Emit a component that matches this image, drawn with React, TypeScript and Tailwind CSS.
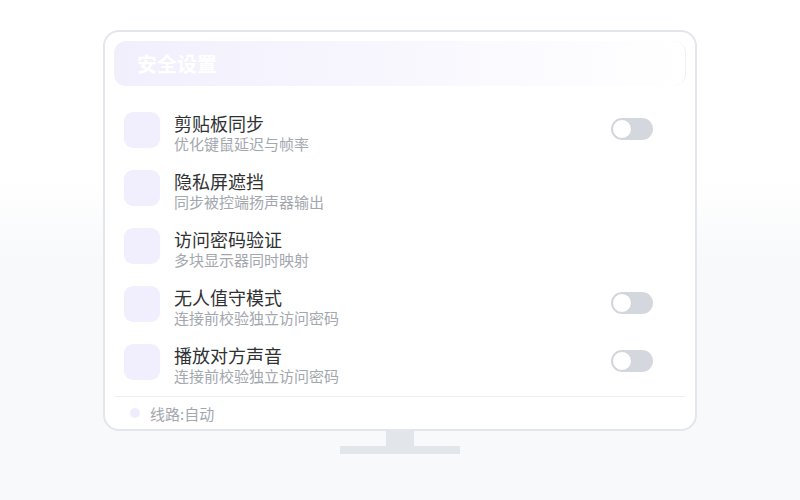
const font = { fontFamily: '"Noto Sans CJK SC", "Noto Sans", sans-serif' };

type Row = { title: string; desc: string; toggle: boolean };

const rows: Row[] = [
  { title: "剪贴板同步", desc: "优化键鼠延迟与帧率", toggle: true },
  { title: "隐私屏遮挡", desc: "同步被控端扬声器输出", toggle: false },
  { title: "访问密码验证", desc: "多块显示器同时映射", toggle: false },
  { title: "无人值守模式", desc: "连接前校验独立访问密码", toggle: true },
  { title: "播放对方声音", desc: "连接前校验独立访问密码", toggle: true },
];

function Toggle() {
  return (
    <div className="mt-[6px] ml-auto flex h-[22px] w-[42px] shrink-0 items-center rounded-full bg-[#d4d7dd] p-[1px]">
      <div className="h-[20px] w-[20px] rounded-full border border-[#cfd3d9] bg-white" />
    </div>
  );
}

export default function App() {
  return (
    <div
      className="flex h-[500px] w-[800px] flex-col items-center bg-linear-to-b from-white from-[36%] to-[#f8f9fb] to-[52%] pt-[30px]"
      style={font}
    >
      {/* monitor screen */}
      <div className="flex w-[594px] flex-col rounded-[16px] border-2 border-[#e3e6eb] bg-white px-[9px] pt-[9px]">
        <div className="flex h-[45px] items-center rounded-[12px] border-r border-[#eef0f4] bg-linear-to-r from-[#f2effd] via-[#f8f7fe] to-white pl-[23px] pr-[40px]">
          <span className="text-[20px] font-bold leading-none text-white">安全设置</span>
          <span className="ml-auto text-[14px] leading-none tracking-[3px] text-white">•••</span>
        </div>

        <div className="mt-[26px] flex flex-col gap-[16px] px-[10px]">
          {rows.map((r) => (
            <div key={r.title} className="flex h-[42px] items-start pr-[23px]">
              <div className="h-[36px] w-[36px] shrink-0 rounded-[9px] bg-[#f1eefd]" />
              <div className="ml-[14px] flex flex-col">
                <span className="text-[18px] leading-[22px] text-[#2f3133]">{r.title}</span>
                <span className="text-[15px] leading-[20px] text-[#a3a7ae]">{r.desc}</span>
              </div>
              {r.toggle && <Toggle />}
            </div>
          ))}
        </div>

        <div className="mt-[10px] h-px bg-[#eef0f3]" />
        <div className="flex h-[32px] items-center pl-[16px]">
          <div className="h-[10px] w-[10px] rounded-full bg-[#efecfd]" />
          <span className="ml-[10px] text-[15px] leading-none text-[#a3a7ae]">线路:自动</span>
        </div>
      </div>

      {/* stand */}
      <div className="h-[15px] w-[28px] bg-[#e2e5ea]" />
      <div className="h-[8px] w-[120px] bg-[#e2e5ea]" />
    </div>
  );
}
